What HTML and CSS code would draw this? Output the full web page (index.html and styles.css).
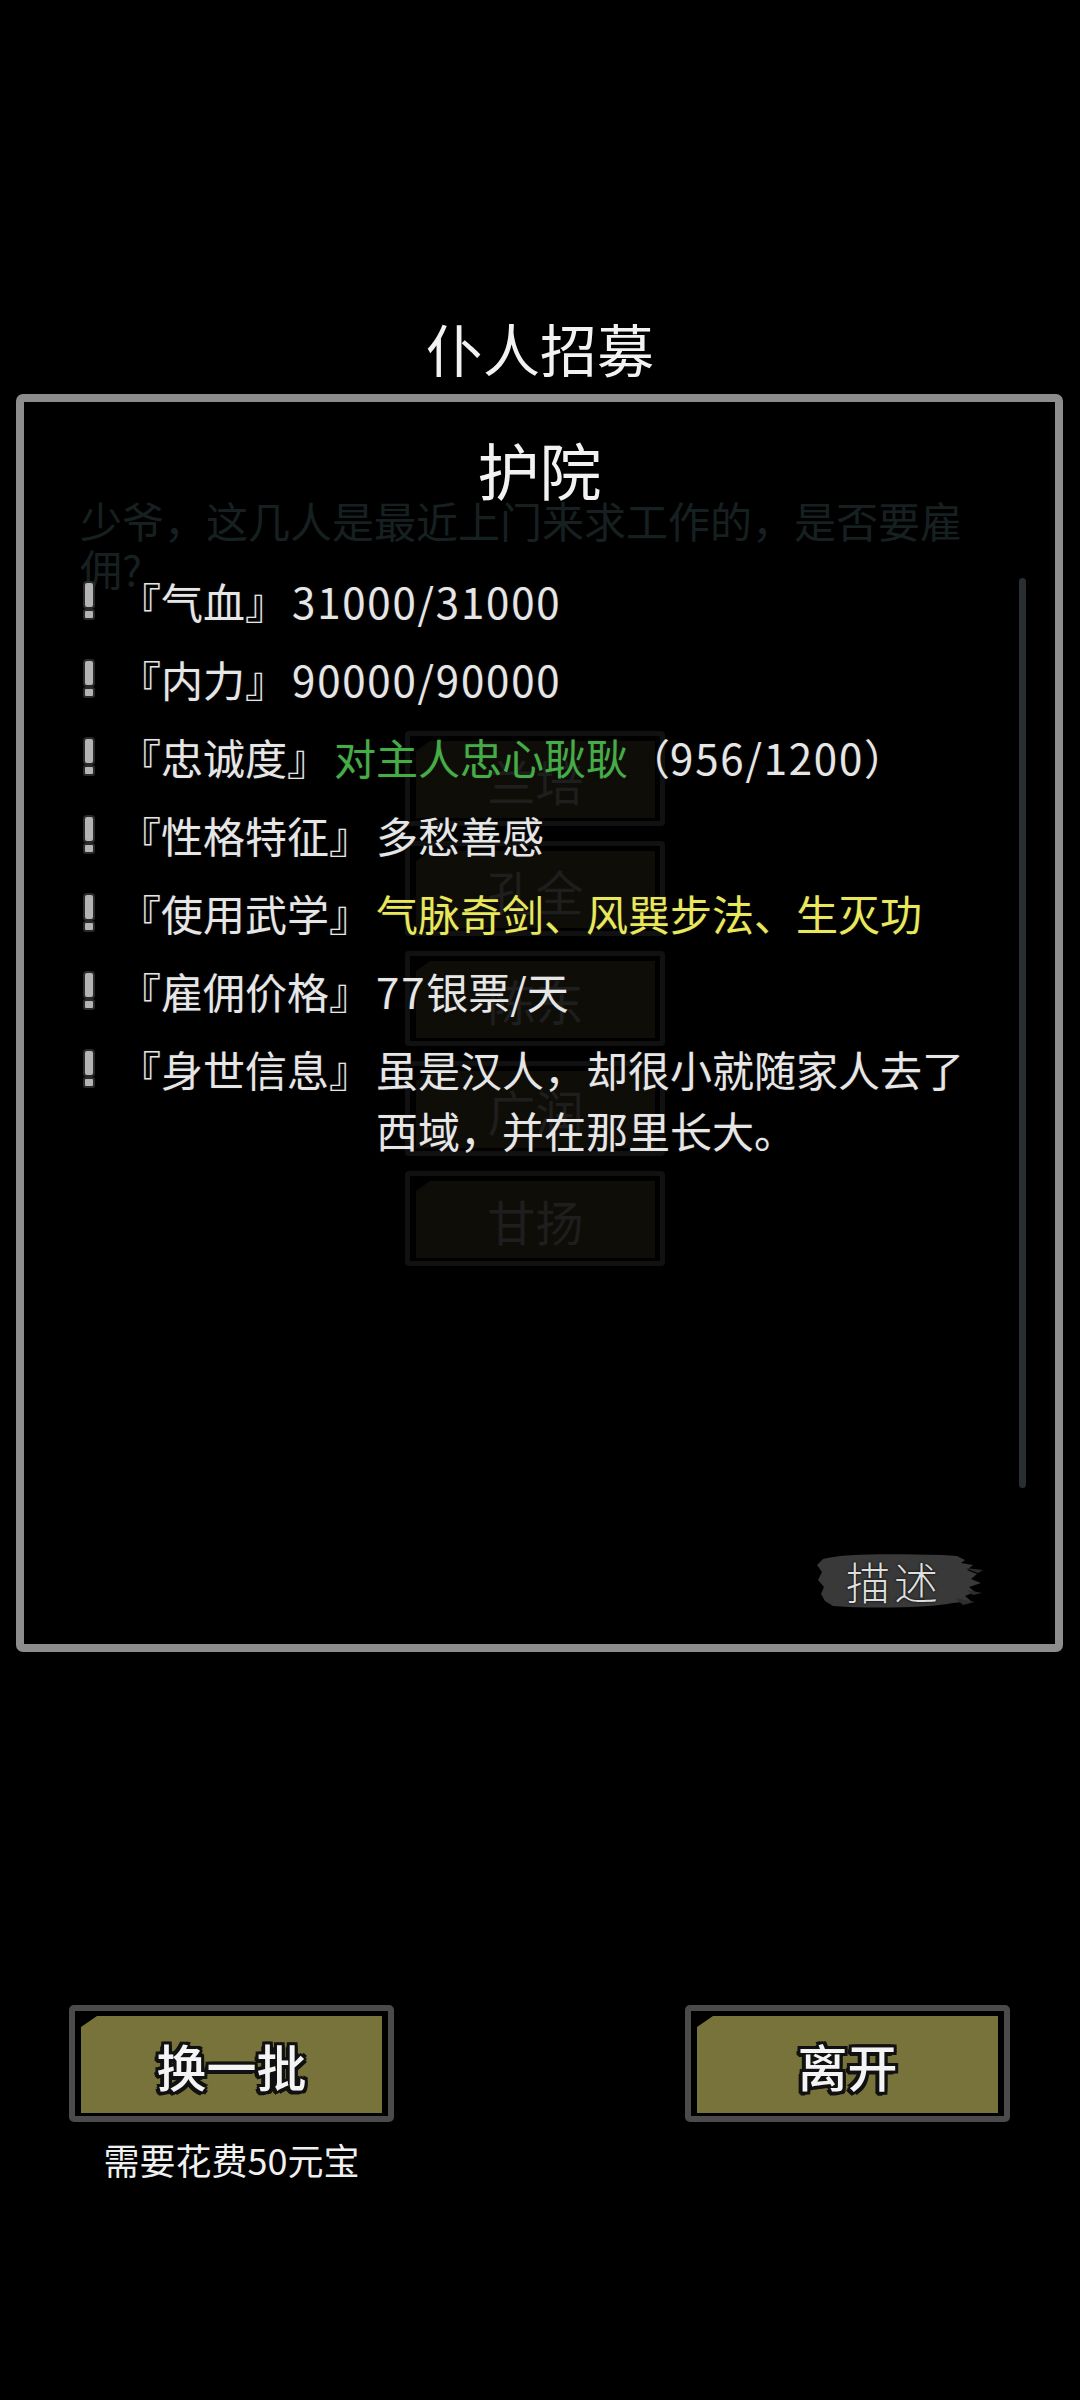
FILE: index.html
```html
<!DOCTYPE html>
<html lang="zh-CN">
<head>
<meta charset="utf-8">
<title>仆人招募</title>
<link rel="stylesheet" href="styles.css">
</head>
<body>
<div class="screen">
  <h1 class="title">仆人招募</h1>
  <div class="panel">
    <div class="layer bg-dialog">
      <p class="bg-text">少爷，这几人是最近上门来求工作的，是否要雇佣?</p>
      <div class="bg-list">
        <div class="bg-btn"><span class="bg-btn-face">兰培</span></div>
        <div class="bg-btn"><span class="bg-btn-face">孔全</span></div>
        <div class="bg-btn"><span class="bg-btn-face">陈东</span></div>
        <div class="bg-btn"><span class="bg-btn-face">广润</span></div>
        <div class="bg-btn"><span class="bg-btn-face">甘扬</span></div>
      </div>
    </div>
    <div class="layer detail">
      <div class="detail-name">护院</div>
      <ul class="attrs">
        <li class="attr"><span class="bang"><i class="bang-bar"></i><i class="bang-dot"></i></span><span class="attr-label">『气血』</span><span class="attr-value"><span class="num">31000/31000</span></span></li>
        <li class="attr"><span class="bang"><i class="bang-bar"></i><i class="bang-dot"></i></span><span class="attr-label">『内力』</span><span class="attr-value"><span class="num">90000/90000</span></span></li>
        <li class="attr"><span class="bang"><i class="bang-bar"></i><i class="bang-dot"></i></span><span class="attr-label">『忠诚度』</span><span class="attr-value"><span class="green">对主人忠心耿耿</span>（<span class="num">956/1200</span>）</span></li>
        <li class="attr"><span class="bang"><i class="bang-bar"></i><i class="bang-dot"></i></span><span class="attr-label">『性格特征』</span><span class="attr-value">多愁善感</span></li>
        <li class="attr"><span class="bang"><i class="bang-bar"></i><i class="bang-dot"></i></span><span class="attr-label">『使用武学』</span><span class="attr-value yellow">气脉奇剑、风巽步法、生灭功</span></li>
        <li class="attr"><span class="bang"><i class="bang-bar"></i><i class="bang-dot"></i></span><span class="attr-label">『雇佣价格』</span><span class="attr-value"><span class="num">77</span>银票/天</span></li>
        <li class="attr"><span class="bang"><i class="bang-bar"></i><i class="bang-dot"></i></span><span class="attr-label">『身世信息』</span><span class="attr-value">虽是汉人，却很小就随家人去了西域，并在那里长大。</span></li>
      </ul>
    </div>
    <div class="layer scroll"></div>
    <div class="layer desc-wrap">
      <button class="desc-btn" type="button">
        <svg class="brush" width="170" height="62" viewBox="0 0 170 62" aria-hidden="true">
          <path d="M8 9 C30 3 80 4 128 5 L142 6 L150 10 L146 13 L158 15 L152 20 L162 24 L156 29 L166 33 L154 37 L160 42 L150 46 L156 51 L138 53 C110 58 70 58 34 57 L18 56 L10 51 L6 44 L9 37 L3 30 L7 22 L2 15 Z" fill="#393939"/>
          <path d="M150 18 L168 20 L163 23 Z M152 40 L167 43 L158 45 Z M140 48 L160 52 L148 55 Z" fill="#2e2e2e"/>
        </svg>
        <span class="desc-text">描述</span>
      </button>
    </div>
  </div>
  <div class="actions">
    <div class="action">
      <button class="btn" type="button"><span class="btn-face">换一批</span></button>
      <div class="cost">需要花费50元宝</div>
    </div>
    <div class="action">
      <button class="btn" type="button"><span class="btn-face">离开</span></button>
    </div>
  </div>
</div>
</body>
</html>
```
FILE: styles.css
```css
* {
  box-sizing: border-box;
  margin: 0;
  padding: 0;
}

html, body {
  background: #000;
}

body {
  width: 1080px;
  height: 2400px;
  overflow: hidden;
  font-family: "Noto Sans CJK SC", "Noto Sans", sans-serif;
  color: #e8e8e8;
}

.screen {
  display: flex;
  flex-direction: column;
  width: 1080px;
}

.title {
  margin-top: 318px;
  margin-bottom: 18px;
  font-size: 57px;
  line-height: 58px;
  font-weight: 400;
  text-align: center;
  color: #f2f2f2;
}

.panel {
  margin-left: 16px;
  width: 1047px;
  height: 1258px;
  border: 8px solid #8d8d8d;
  border-radius: 7px;
  background: #000;
  display: grid;
  grid-template-columns: 1fr;
  grid-template-rows: 1fr;
}

.layer {
  grid-area: 1 / 1;
  min-width: 0;
  position: relative;
}

/* dimmed dialog underneath */
.bg-dialog {
  z-index: 0;
  display: flex;
  flex-direction: column;
  align-items: flex-start;
  padding: 94px 0 0 56px;
}

.bg-text {
  width: 900px;
  font-size: 42px;
  line-height: 48px;
  color: #172020;
}

.bg-list {
  margin-top: 139px;
  margin-left: 325px;
  display: flex;
  flex-direction: column;
  gap: 15px;
}

.bg-btn {
  width: 260px;
  height: 95px;
  border: 5px solid #111;
  border-radius: 4px;
  padding: 5px 5px 3px 6px;
}

.bg-btn-face {
  display: flex;
  height: 100%;
  align-items: center;
  justify-content: center;
  background: #0e0d08;
  clip-path: polygon(14px 0, 100% 0, 100% 100%, 0 100%, 0 10px);
  font-size: 48px;
  color: #1e1e1e;
}

/* detail overlay */
.detail {
  z-index: 1;
  display: flex;
  flex-direction: column;
  padding-top: 36px;
}

.detail-name {
  font-size: 62px;
  line-height: 62px;
  text-align: center;
  color: #f2f2f2;
}

.attrs {
  list-style: none;
  margin-top: 70px;
  padding: 0 60px 0 61px;
  display: flex;
  flex-direction: column;
  gap: 17px;
}

.attr {
  display: flex;
  align-items: flex-start;
  font-size: 42px;
  line-height: 61px;
  color: #e6e6e6;
  text-shadow: 0 0 2px #222;
}

.bang {
  flex: none;
  width: 8px;
  height: 61px;
  margin-right: 26px;
  display: flex;
  flex-direction: column;
  align-items: center;
  justify-content: center;
}

.bang-bar {
  display: block;
  width: 8px;
  height: 24px;
  background: #b4b4b4;
  border-radius: 2px;
  box-shadow: 0 0 0 2px #2a2a2a;
}

.bang-dot {
  display: block;
  width: 8px;
  height: 7px;
  margin-top: 4px;
  background: #b4b4b4;
  border-radius: 1px;
  box-shadow: 0 0 0 2px #2a2a2a;
}

.attr-label {
  flex: none;
  white-space: nowrap;
}

.attr-value {
  flex: 1;
  min-width: 0;
  margin-left: 5px;
}

.num {
  letter-spacing: 1.8px;
}

.green {
  color: #45ad45;
}

.yellow {
  color: #e8e85a;
}

/* scrollbar */
.scroll {
  z-index: 2;
  justify-self: end;
  align-self: start;
  width: 7px;
  height: 910px;
  margin-top: 176px;
  margin-right: 29px;
  background: #292e33;
  border-radius: 4px;
}

/* brush button */
.desc-wrap {
  z-index: 2;
  justify-self: end;
  align-self: end;
  margin-right: 70px;
  margin-bottom: 32px;
}

.desc-btn {
  display: grid;
  width: 170px;
  height: 62px;
  background: none;
  border: none;
  place-items: center;
}

.brush {
  grid-area: 1 / 1;
  display: block;
}

.desc-text {
  grid-area: 1 / 1;
  margin-right: 12px;
  font-family: "Noto Sans CJK SC", sans-serif;
  font-weight: 300;
  font-size: 44px;
  line-height: 44px;
  letter-spacing: 4px;
  color: #dedede;
  text-shadow: 0 0 3px #111, 0 0 1px #000;
}

/* bottom actions */
.actions {
  margin-top: 353px;
  display: flex;
  justify-content: space-between;
  padding: 0 70px 0 69px;
}

.action {
  width: 325px;
  display: flex;
  flex-direction: column;
  align-items: center;
}

.btn {
  display: block;
  width: 325px;
  height: 117px;
  border: 6px solid #4b4b4b;
  border-radius: 5px;
  background: #000;
  padding: 5px 6px 3px 6px;
  font-family: inherit;
}

.btn-face {
  display: flex;
  height: 100%;
  align-items: center;
  justify-content: center;
  background: #78733a;
  clip-path: polygon(16px 0, 100% 0, 100% 100%, 0 100%, 0 11px);
  font-size: 50px;
  font-weight: 500;
  line-height: 1;
  color: #f4f4f4;
  text-shadow:
    -3px -3px 0 #111, 0 -3px 0 #111, 3px -3px 0 #111, 3px 0 0 #111,
    3px 3px 0 #111, 0 3px 0 #111, -3px 3px 0 #111, -3px 0 0 #111,
    -2px 4px 0 #111, -4px 2px 0 #111;
}

.cost {
  margin-top: 15px;
  font-size: 36px;
  line-height: 44px;
  color: #f0f0f0;
}
```
